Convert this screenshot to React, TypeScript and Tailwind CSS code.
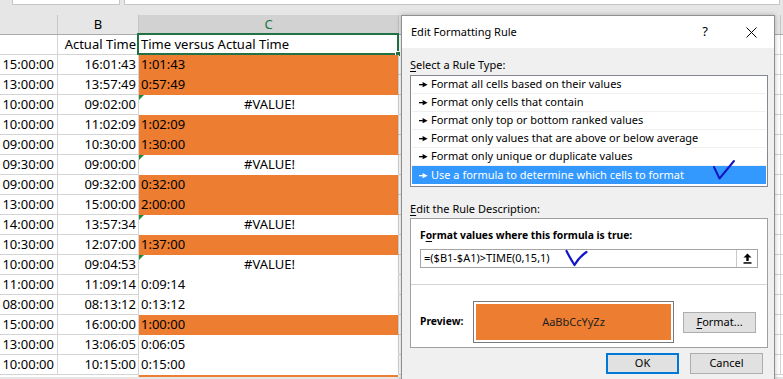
import React from "react";

type Kind = "orange" | "value" | "plain";
type Row = { a: string; b: string; c: string; kind: Kind };

const rows: Row[] = [
  { a: "15:00:00", b: "16:01:43", c: "1:01:43", kind: "orange" },
  { a: "13:00:00", b: "13:57:49", c: "0:57:49", kind: "orange" },
  { a: "10:00:00", b: "09:02:00", c: "#VALUE!", kind: "value" },
  { a: "10:00:00", b: "11:02:09", c: "1:02:09", kind: "orange" },
  { a: "09:00:00", b: "10:30:00", c: "1:30:00", kind: "orange" },
  { a: "09:30:00", b: "09:00:00", c: "#VALUE!", kind: "value" },
  { a: "09:00:00", b: "09:32:00", c: "0:32:00", kind: "orange" },
  { a: "13:00:00", b: "15:00:00", c: "2:00:00", kind: "orange" },
  { a: "14:00:00", b: "13:57:34", c: "#VALUE!", kind: "value" },
  { a: "10:30:00", b: "12:07:00", c: "1:37:00", kind: "orange" },
  { a: "10:00:00", b: "09:04:53", c: "#VALUE!", kind: "value" },
  { a: "11:00:00", b: "11:09:14", c: "0:09:14", kind: "plain" },
  { a: "08:00:00", b: "08:13:12", c: "0:13:12", kind: "plain" },
  { a: "15:00:00", b: "16:00:00", c: "1:00:00", kind: "orange" },
  { a: "13:00:00", b: "13:06:05", c: "0:06:05", kind: "plain" },
  { a: "10:00:00", b: "10:15:00", c: "0:15:00", kind: "plain" },
];

const ruleTypes = [
  "Format all cells based on their values",
  "Format only cells that contain",
  "Format only top or bottom ranked values",
  "Format only values that are above or below average",
  "Format only unique or duplicate values",
  "Use a formula to determine which cells to format",
];

function Pointer({ light }: { light?: boolean }) {
  const c = light ? "#ffffff" : "#000000";
  return (
    <svg width="9" height="7" viewBox="0 0 9 7" className="shrink-0">
      <rect x="0" y="3" width="4.5" height="1.3" fill={c} />
      <path d="M3.6 1 L8.6 3.65 L3.6 6.3 Z" fill={c} />
    </svg>
  );
}

function SheetRow({ row }: { row: Row }) {
  const c =
    row.kind === "orange"
      ? "bg-[#ed7d31] border-b-[#ed7d31]"
      : "bg-white border-b-white";
  return (
    <div className="flex h-[20px] leading-[19px]">
      <div className="w-[58px] shrink-0 border-r border-b border-[#d4d4d4] pr-[3px] text-right">{row.a}</div>
      <div className="w-[81px] shrink-0 border-r border-b border-[#d4d4d4] pr-[2px] text-right">{row.b}</div>
      <div
        className={
          "relative w-[260px] shrink-0 border-r border-b border-r-[#d4d4d4] pl-[2px] " +
          c +
          (row.kind === "value" ? " text-center" : "")
        }
      >
        {row.kind === "value" && (
          <span className="absolute left-0 top-0 h-0 w-0 border-t-[5px] border-r-[5px] border-t-[#1e8a3c] border-r-transparent" />
        )}
        {row.c}
      </div>
      <div className="w-[382px] shrink-0 border-r border-b border-[#d4d4d4]" />
      <div className="flex-1 border-b border-[#d4d4d4]" />
    </div>
  );
}

export default function App() {
  return (
    <div
      className="relative h-[379px] w-[783px] overflow-hidden bg-white text-[13px] text-black"
      style={{ fontFamily: '"Noto Sans", Arial, sans-serif' }}
    >
      {/* formula bar leftovers */}
      <div className="flex h-[15px] items-start bg-[#e6e6e6]">
        <div className="ml-[12px] h-[5px] w-[108px] border-x border-b border-[#c6c6c6] bg-white" />
        <div className="ml-[4px] h-[5px] w-[656px] border-x border-b border-[#c6c6c6] bg-white" />
      </div>

      {/* column headers */}
      <div className="flex h-[20px] border-b border-[#ababab] bg-[#e6e6e6] leading-[19px]">
        <div className="w-[58px] shrink-0 border-r border-[#c6c6c6]" />
        <div className="w-[81px] shrink-0 border-r border-[#c6c6c6] text-center">B</div>
        <div className="w-[260px] shrink-0 border-r border-[#c6c6c6] bg-[#d2d2d2] text-center text-[#217346]">C</div>
        <div className="w-[382px] shrink-0 border-r border-[#c6c6c6]" />
        <div className="flex-1" />
      </div>

      {/* row 1 */}
      <div className="flex h-[20px] leading-[19px]">
        <div className="w-[58px] shrink-0 border-r border-b border-[#d4d4d4]" />
        <div className="w-[81px] shrink-0 border-r border-b border-[#d4d4d4] pr-[2px] text-right">Actual Time</div>
        <div className="relative w-[260px] shrink-0 border-r border-b border-[#d4d4d4] pl-[2px]">
          Time versus Actual Time
          <div className="absolute -left-[2px] -top-[2px] -right-[1px] -bottom-[1px] border-2 border-[#217346]" />
          <div className="absolute -right-[3px] -bottom-[3px] h-[6px] w-[6px] border border-white bg-[#217346]" />
        </div>
        <div className="w-[382px] shrink-0 border-r border-b border-[#d4d4d4]" />
        <div className="flex-1 border-b border-[#d4d4d4]" />
      </div>

      {rows.map((r, i) => (
        <SheetRow key={i} row={r} />
      ))}

      {/* last partly visible row, then the window edge */}
      <div className="flex h-[2px]">
        <div className="w-[139px] shrink-0 border-r border-[#d4d4d4]" />
        <div className="w-[259px] shrink-0 bg-[#ed7d31]" />
        <div className="flex-1" />
      </div>
      <div className="h-[10px] bg-[#e6e6e6]" />

      {/* dialog */}
      <div
        className="absolute left-[401px] top-[15px] flex h-[380px] w-[374px] flex-col border border-[#8f8f8f] bg-[#f0f0f0] text-[11px] shadow-[0_0_5px_rgba(0,0,0,0.25)]"
      >
        <div className="flex h-[32px] shrink-0 items-center bg-white pl-[9px]">
          <span className="text-[11px]">Edit Formatting Rule</span>
          <div className="ml-auto flex h-full">
            <div className="flex w-[46px] items-center justify-center text-[13px]">?</div>
            <div className="flex w-[46px] items-center justify-center">
              <svg width="11" height="11" viewBox="0 0 11 11">
                <path d="M0.5 0.5 L10.5 10.5 M10.5 0.5 L0.5 10.5" stroke="#000" strokeWidth="1" />
              </svg>
            </div>
          </div>
        </div>

        <div className="flex flex-col pl-[8px] pt-[9px]">
          <div className="h-[15px] leading-[15px]">
            <span className="underline underline-offset-[2px]">S</span>elect a Rule Type:
          </div>

          <div className="mt-[3px] h-[112px] w-[358px] border border-[#828790] bg-white px-[1px] pb-[2px]">
            {ruleTypes.map((t, i) => {
              const sel = i === ruleTypes.length - 1;
              return (
                <div
                  key={t}
                  className={
                    "flex h-[18px] items-center gap-[3px] pl-[7px] " +
                    (sel ? "bg-[#3399ff] text-white" : "border-b border-[#f0f0f0]")
                  }
                >
                  <Pointer light={sel} />
                  <span>{t}</span>
                </div>
              );
            })}
          </div>

          <div className="mt-[14px] h-[15px] leading-[15px]">
            <span className="underline underline-offset-[2px]">E</span>dit the Rule Description:
          </div>

          <div className="mt-[2px] flex w-[358px] flex-col border border-[#a0a0a0] bg-white">
            <div className="pl-[9px] pt-[9px]">
              <div className="h-[15px] text-[10.3px] font-bold leading-[15px]">
                F<span className="underline underline-offset-[2px]">o</span>rmat values where this formula is true:
              </div>
              <div className="mt-[6px] flex h-[19px] w-[338px] items-center border border-[#a5a5a5] bg-white">
                <span className="flex-1 pl-[3px]">=($B1-$A1)&gt;TIME(0,15,1)</span>
                <div className="flex h-full w-[21px] items-center justify-center border-l border-[#c8c8c8]">
                  <svg width="9" height="11" viewBox="0 0 9 11">
                    <path d="M4.5 0.5 L8.5 4.5 L5.7 4.5 L5.7 8 L3.3 8 L3.3 4.5 L0.5 4.5 Z" fill="#000" />
                    <rect x="0.5" y="9.2" width="8" height="1.5" fill="#000" />
                  </svg>
                </div>
              </div>
            </div>
            <div className="mt-[16px] h-px bg-[#d4d4d4]" />
            <div className="flex items-center pb-[4px] pl-[9px] pt-[16px]">
              <span className="w-[53px] text-[10.3px] font-bold">Preview:</span>
              <div className="h-[42px] w-[201px] border border-[#7a7a7a] bg-white p-[2px]">
                <div className="flex h-full items-center justify-center bg-[#ed7d31] text-[#222]">AaBbCcYyZz</div>
              </div>
              <div className="ml-[9px] flex h-[21px] w-[73px] items-center justify-center border border-[#adadad] bg-[#e1e1e1]">
                <span className="underline underline-offset-[2px]">F</span>ormat...
              </div>
            </div>
          </div>

          <div className="mt-[5px] flex gap-[11px] pl-[196px]">
            <div className="flex h-[21px] w-[73px] items-center justify-center border-2 border-[#0078d7] bg-[#e1e1e1]">OK</div>
            <div className="flex h-[21px] w-[73px] items-center justify-center border border-[#adadad] bg-[#e1e1e1]">Cancel</div>
          </div>
        </div>
      </div>

      {/* hand-drawn check marks */}
      <svg className="pointer-events-none absolute left-0 top-0" width="783" height="379">
        <path d="M714 167 L719.5 178.5 L734 161" fill="none" stroke="#1414c8" strokeWidth="2" strokeLinecap="round" strokeLinejoin="round" />
        <path d="M566.5 251 Q570 258 574.5 265 Q579 257 586.5 252" fill="none" stroke="#1414c8" strokeWidth="2.2" strokeLinecap="round" strokeLinejoin="round" />
      </svg>
    </div>
  );
}
